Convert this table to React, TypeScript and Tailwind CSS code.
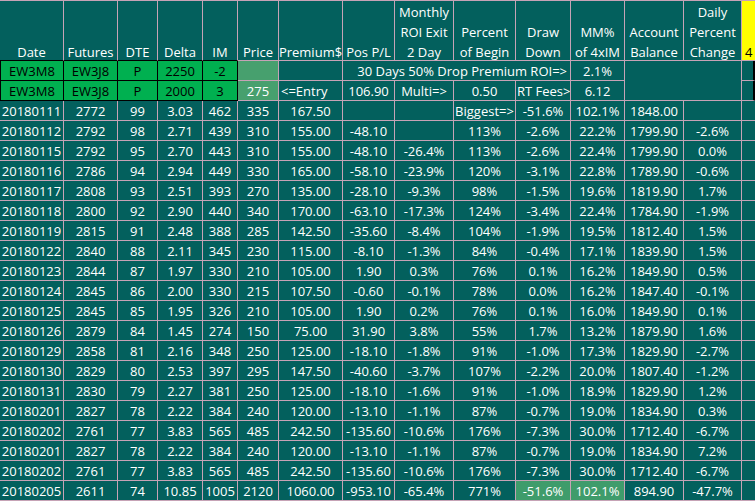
import React from "react";

// Spreadsheet snapshot: teal sheet, pink grid, two green "position" rows.
const GRID = "border-[#c6a3b6]";
const TEAL = "bg-[#03605d]";

const header = [
  ["Date"],
  ["Futures"],
  ["DTE"],
  ["Delta"],
  ["IM"],
  ["Price"],
  ["Premium$"],
  ["Pos P/L"],
  ["Monthly", "ROI Exit", "2 Day"],
  ["Percent", "of Begin"],
  ["Draw", "Down"],
  ["MM%", "of 4xIM"],
  ["Account", "Balance"],
  ["Daily", "Percent", "Change"],
];

const rows: string[][] = [
  ["20180111", "2772", "99", "3.03", "462", "335", "167.50", "", "", "Biggest=>", "-51.6%", "102.1%", "1848.00", ""],
  ["20180112", "2792", "98", "2.71", "439", "310", "155.00", "-48.10", "", "113%", "-2.6%", "22.2%", "1799.90", "-2.6%"],
  ["20180115", "2792", "95", "2.70", "443", "310", "155.00", "-48.10", "-26.4%", "113%", "-2.6%", "22.4%", "1799.90", "0.0%"],
  ["20180116", "2786", "94", "2.94", "449", "330", "165.00", "-58.10", "-23.9%", "120%", "-3.1%", "22.8%", "1789.90", "-0.6%"],
  ["20180117", "2808", "93", "2.51", "393", "270", "135.00", "-28.10", "-9.3%", "98%", "-1.5%", "19.6%", "1819.90", "1.7%"],
  ["20180118", "2800", "92", "2.90", "440", "340", "170.00", "-63.10", "-17.3%", "124%", "-3.4%", "22.4%", "1784.90", "-1.9%"],
  ["20180119", "2815", "91", "2.48", "388", "285", "142.50", "-35.60", "-8.4%", "104%", "-1.9%", "19.5%", "1812.40", "1.5%"],
  ["20180122", "2840", "88", "2.11", "345", "230", "115.00", "-8.10", "-1.3%", "84%", "-0.4%", "17.1%", "1839.90", "1.5%"],
  ["20180123", "2844", "87", "1.97", "330", "210", "105.00", "1.90", "0.3%", "76%", "0.1%", "16.2%", "1849.90", "0.5%"],
  ["20180124", "2845", "86", "2.00", "330", "215", "107.50", "-0.60", "-0.1%", "78%", "0.0%", "16.2%", "1847.40", "-0.1%"],
  ["20180125", "2845", "85", "1.95", "326", "210", "105.00", "1.90", "0.2%", "76%", "0.1%", "16.0%", "1849.90", "0.1%"],
  ["20180126", "2879", "84", "1.45", "274", "150", "75.00", "31.90", "3.8%", "55%", "1.7%", "13.2%", "1879.90", "1.6%"],
  ["20180129", "2858", "81", "2.16", "348", "250", "125.00", "-18.10", "-1.8%", "91%", "-1.0%", "17.3%", "1829.90", "-2.7%"],
  ["20180130", "2829", "80", "2.53", "397", "295", "147.50", "-40.60", "-3.7%", "107%", "-2.2%", "20.0%", "1807.40", "-1.2%"],
  ["20180131", "2830", "79", "2.27", "381", "250", "125.00", "-18.10", "-1.6%", "91%", "-1.0%", "18.9%", "1829.90", "1.2%"],
  ["20180201", "2827", "78", "2.22", "384", "240", "120.00", "-13.10", "-1.1%", "87%", "-0.7%", "19.0%", "1834.90", "0.3%"],
  ["20180202", "2761", "77", "3.83", "565", "485", "242.50", "-135.60", "-10.6%", "176%", "-7.3%", "30.0%", "1712.40", "-6.7%"],
  ["20180201", "2827", "78", "2.22", "384", "240", "120.00", "-13.10", "-1.1%", "87%", "-0.7%", "19.0%", "1834.90", "7.2%"],
  ["20180202", "2761", "77", "3.83", "565", "485", "242.50", "-135.60", "-10.6%", "176%", "-7.3%", "30.0%", "1712.40", "-6.7%"],
  ["20180205", "2611", "74", "10.85", "1005", "2120", "1060.00", "-953.10", "-65.4%", "771%", "-51.6%", "102.1%", "894.90", "-47.7%"],
];

const positions = [
  ["EW3M8", "EW3J8", "P", "2250", "-2"],
  ["EW3M8", "EW3J8", "P", "2000", "3"],
];

function Cell({ children, className = "" }: { children?: React.ReactNode; className?: string }) {
  return (
    <div className={`flex items-center justify-center overflow-hidden whitespace-nowrap border-r border-b pt-[1px] leading-[19px] ${className}`}>
      {children}
    </div>
  );
}

export default function App() {
  const last = rows.length - 1;
  return (
    <div className={`h-[501px] w-[755px] overflow-hidden ${TEAL}`}>
      <div
        className={`grid grid-cols-[64px_54px_40px_45px_35px_41px_64px_52px_59px_62px_55px_54px_59px_58px_14px] grid-rows-[60px_repeat(22,20px)] border-t ${GRID} text-[13px] text-white`}
        style={{ fontFamily: '"Open Sans", "Liberation Sans", sans-serif' }}
      >
        {/* header */}
        {header.map((lines, i) => (
          <div
            key={i}
            className={`flex flex-col items-center justify-end whitespace-nowrap border-r border-b ${GRID} ${i < 5 ? "border-b-black" : ""}`}
          >
            {lines.map((l) => (
              <span key={l} className="translate-y-[2px] leading-[20px]">{l}</span>
            ))}
          </div>
        ))}
        <div className={`flex items-end border-b ${GRID} bg-[#ffff00] pl-[3px] leading-[20px] text-black`}>
          <span className="translate-y-[2px]">4</span>
        </div>

        {/* position row 1 */}
        {positions[0].map((v, i) => (
          <Cell key={"a" + i} className={`border-black bg-[#00b050] text-black ${i === 0 ? "border-l" : ""}`}>{v}</Cell>
        ))}
        <Cell className={`${GRID} bg-[#47a06e]`} />
        <Cell className={GRID} />
        <Cell className={`col-span-4 justify-end pr-[3px] ${GRID}`}>30 Days 50% Drop Premium ROI=&gt;</Cell>
        <Cell className={GRID}>2.1%</Cell>
        <div className={`col-span-2 row-span-2 border-r border-b ${GRID}`} />
        <Cell className={`border-b ${GRID} border-r-[3px] border-r-black`} />

        {/* position row 2 */}
        {positions[1].map((v, i) => (
          <Cell key={"b" + i} className={`border-black bg-[#00b050] text-black ${i === 0 ? "border-l" : ""}`}>{v}</Cell>
        ))}
        <Cell className={`${GRID} bg-[#47a06e]`}>275</Cell>
        <Cell className={`justify-start pl-[2px] ${GRID}`}>&lt;=Entry</Cell>
        <Cell className={GRID}>106.90</Cell>
        <Cell className={GRID}>Multi=&gt;</Cell>
        <Cell className={GRID}>0.50</Cell>
        <Cell className={`justify-start pl-[1px] ${GRID}`}>RT Fees&gt;</Cell>
        <Cell className={GRID}>6.12</Cell>
        <Cell className={`border-b ${GRID} border-r-[3px] border-r-black`} />

        {/* data rows */}
        {rows.map((r, ri) =>
          [...r, ""].map((v, ci) => (
            <Cell
              key={ri + "-" + ci}
              className={`${GRID} ${ri === last && (ci === 10 || ci === 11) ? "bg-[#3f9c6b]" : ""}`}
            >
              {v}
            </Cell>
          ))
        )}
      </div>
    </div>
  );
}
